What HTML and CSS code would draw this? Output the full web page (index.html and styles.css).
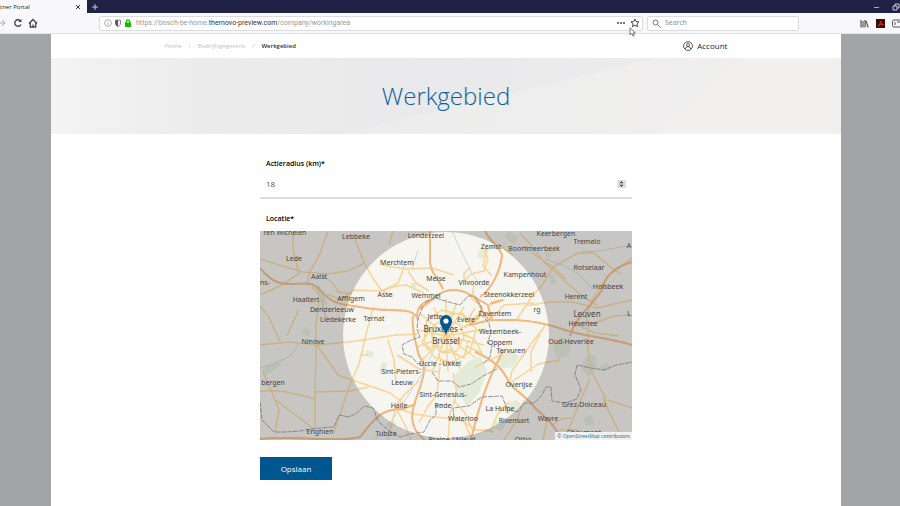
FILE: index.html
```html
<!DOCTYPE html>
<html lang="nl">
<head>
<meta charset="utf-8">
<title>Werkgebied - Partner Portal</title>
<link rel="stylesheet" href="styles.css">
</head>
<body>
<div class="tabs">
  <div class="tab"><span>tner Portal</span>
    <button class="icon" aria-label="Tab sluiten"><svg width="6" height="6" viewBox="0 0 6 6"><path d="M1 1l4 4M5 1L1 5" stroke="#333"/></svg></button>
  </div>
  <button class="icon" aria-label="Nieuw tabblad"><svg width="8" height="8" viewBox="0 0 8 8"><path d="M4 1v6M1 4h6" stroke="#c9c9dc"/></svg></button>
  <div class="controls">
    <svg width="6" height="6" viewBox="0 0 6 6"><path d="M0 3.500h5" stroke="#aaaabd"/></svg>
    <svg width="8" height="8" viewBox="0 0 8 8" fill="none" stroke="#c9c9dc"><path d="M1 3h4v4H1zM3 3V1h4v4H5"/></svg>
  </div>
</div>
<div class="toolbar">
  <div class="nav">
    <button class="icon" aria-label="Volgende"><svg width="8" height="10" viewBox="0 0 8 10" fill="none" stroke="#aaa"><path d="M0 5h5M2 2l3 3-3 3"/></svg></button>
    <button class="icon" aria-label="Vernieuwen"><svg width="10" height="10" viewBox="0 0 10 10" fill="none" stroke="#444" stroke-width="1.400"><path d="M8 6.500A3.300 3.300 0 1 1 7.500 2.800"/><path d="M8.500 1v3H5.500z" fill="#444" stroke="none"/></svg></button>
    <button class="icon" aria-label="Startpagina"><svg width="10" height="10" viewBox="0 0 10 10" fill="none" stroke="#444" stroke-width="1.300"><path d="M1 5.500L5 1.500l4 4M2.300 5v4h5.400V5M5 9V6.500"/></svg></button>
  </div>
  <div class="address">
    <svg width="8" height="8" viewBox="0 0 8 8" fill="none" stroke="#999" stroke-width=".8"><circle cx="4" cy="4" r="3.400"/><path d="M4 3.500V6M4 2v.8"/></svg>
    <svg width="8" height="8" viewBox="0 0 8 8"><path d="M1.500 1.200h5V4c0 2-1.200 3-2.500 3.600C2.700 7 1.500 6 1.500 4z" fill="none" stroke="#666" stroke-width=".8"/><path d="M1.500 1.200H4v6.200C2.500 7 1.500 6 1.500 4z" fill="#555"/></svg>
    <svg width="8" height="8" viewBox="0 0 8 8"><path d="M1 3.500h6V8H1z" fill="#12bc00"/><path d="M2.300 4V2.500a1.700 1.700 0 0 1 3.400 0V4" fill="none" stroke="#12bc00" stroke-width="1.200"/></svg>
    <span class="url">https://bosch-be-home.<b>thernovo-preview.com</b>/company/workingarea</span>
    <button class="icon" aria-label="Paginaacties"><svg width="10" height="8" viewBox="0 0 10 8" fill="#444"><circle cx="2" cy="4" r="1"/><circle cx="5" cy="4" r="1"/><circle cx="8" cy="4" r="1"/></svg></button>
    <button class="icon" aria-label="Bladwijzer"><svg width="10" height="10" viewBox="0 0 10 10" fill="none" stroke="#444"><path d="M5 1l1.200 2.600 2.800.3L6.900 5.800l.6 2.900L5 7.300 2.500 8.700l.6-2.900L1 3.900l2.800-.3z"/></svg></button>
    <svg class="cursor" width="8" height="10" viewBox="0 0 8 10"><path d="M1 .8v7l1.700-1.500L4 9l1.200-.6-1.200-2.500h2.300z" fill="#fff" stroke="#555" stroke-width=".8"/></svg>
  </div>
  <label class="search">
    <svg width="9" height="9" viewBox="0 0 9 9" fill="none" stroke="#777"><circle cx="3.500" cy="3.500" r="2.500"/><path d="M5.500 5.500L8.500 8.500"/></svg>
    <input type="search" placeholder="Search" aria-label="Search">
  </label>
  <div class="tools">
    <svg width="9" height="9" viewBox="0 0 9 9" stroke="#555" stroke-width="1.200"><path d="M1 1v7.500M3 2v6.500M5 1v7.500M6 2l2.200 6.500"/></svg>
    <svg width="9" height="9" viewBox="0 0 9 9"><path d="M0 0h9v9H0z" fill="#3d0b0b"/><path d="M2 7c2-1 2.500-3 2.500-5C4.500 4 5.500 5.500 7.500 5.500 5 5 3.500 5.500 2 7z" fill="none" stroke="#e33" stroke-width=".8"/></svg>
    <svg width="8" height="9" viewBox="0 0 8 9" fill="none" stroke="#555"><path d="M8 1H2Q.5 1 .5 2.500v4Q.5 8 2 8h6M3 3v3M5 3h3"/></svg>
  </div>
</div>
<div class="viewport">
<div class="page">
  <header class="top">
    <nav class="crumbs" aria-label="Kruimelpad"><a href="#">Home</a><span>/</span><a href="#">Bedrijfsgegevens</a><span>/</span><b>Werkgebied</b></nav>
    <a class="account" href="#"><svg width="10" height="10" viewBox="0 0 10 10" fill="none" stroke="#333" stroke-width=".8"><circle cx="5" cy="5" r="4.400"/><circle cx="5" cy="3.800" r="1.500"/><path d="M2.200 8c.2-3 5.400-3 5.600 0"/></svg>Account</a>
  </header>
  <div class="hero"><svg class="facets" viewBox="0 0 790 76" preserveAspectRatio="none">
    <defs>
      <linearGradient id="base"><stop offset="0" stop-color="#f4f4f4"/><stop offset=".18" stop-color="#ececec"/><stop offset=".5" stop-color="#e9e9eb"/><stop offset="1" stop-color="#f0eeee"/></linearGradient>
      <linearGradient id="wedge"><stop offset="0" stop-color="#ececec"/><stop offset="1" stop-color="#f1f0ef"/></linearGradient>
    </defs>
    <path d="M0 0h790v76H0z" fill="url(#base)"/><path d="M290 76L605 0H790v76z" fill="url(#wedge)"/><path d="M605 76L690 0h100v76z" fill="#f1f0ef"/></svg>
    <h1>Werkgebied</h1>
  </div>
  <form class="form">
    <label class="label" for="radius">Actieradius (km)*</label>
    <div class="field">
      <input id="radius" type="number" value="18">
      <svg width="9" height="8" viewBox="0 0 9 8"><path d="M0 0h9v8H0z" fill="#dedede"/><path d="M2.500 3.300l2-2.300 2 2.300zM2.500 4.700l2 2.300 2-2.300z" fill="#444"/></svg>
    </div>
    <div class="label place" id="locatie">Locatie*</div>
    <div class="map" role="group" aria-labelledby="locatie">
      <svg class="tiles" viewBox="260 231 372 209">
        <path d="M260 231h372v209H260z" fill="#f7f5f0"/>
        <g fill="#d3e5c4" opacity=".5">
          <path d="M455 375l14-14 12-4 6 14-8 22-12 14-10-18zM497 352l14-3 8 8-6 10-14 2zM553 345l8-8 10 4-2 14-12 4zM585 357l10-2 2 14-8 8-8-8zM508 231l10 6-4 8-9-8zM316 288l7 2 5 14-6 4zM262 370l12-8 8 2-10 8-8 4zM480 248l7 2-4 9-6-2zM548 247l6 5-6 6-4-5z"/>
          <path d="M382 362l6 1-3 8-6 3zM505 404l12-4 6 6-14 8zM412 282l5 2-2 6-5-3zM366 350l8 2-2 6-6-2zM494 421l12 2-4 8-10-3zM386 423l7-3 4 4-8 5zM548 274l6 2 3 7-6 2zM584 418l8-3 2 9-8 2zM304 327l7 4-3 6-6-4zM600 366l8-3 2 7-8 2z"/>
        </g>
        <g class="water"><path d="M452 231l8 18 12 24 10 15M418 250l-6 20M545 259l18 6 17 10 12 14M580 252l20-1 20-4 12-1M375 440l18-21 16-25 18-28 10-24M260 368l14-4 16-8 9-12M318 285l6 13-2 12"/></g>
        <g class="minor">
          <path d="M293 231l0 18 6 24M328 231l-9 25-10 17-2 13M260 259l19 6 24 7 24 2 21-3 17-8M260 295l20-9 20-13M355 240l8 20 9 17 9 13 12 6M312 287l8 8 5 20 5 5M327 294l14 6 13-10 26 1 17-5 9-1 18 8M322 275l11 8 5 9 14 2M299 310l-5 10-7 16M319 300l-3 25 0 30-1 30 0 45M373 307l-7 27-7 30-10 23-15 45M260 345l30-3 28 3 38-4 40-6 22-1M280 341l-12-25-8-10M317 345l9 13 12 17 14 5 18 6 20 7 16 12M260 391l22 0 22 5 11 3M276 400l14 11 14 10 10 9M263 372l8 18 8 20-4 22M315 392l34-1 20-4"/>
          <path d="M388 340l6 20 2 25M360 355l8 0M405 265l-7 18-16 8M408 271l8 12 13 8M430 231l0 26M382 265l23 4 27-1M393 231l-4 14M432 268l22 7M463 282l8-8 13-3 4-12-4-10 17-3 12 9M487 249l-4 17 9 10M464 280l0-7 6-5M474 285l-2 14 10 8M524 247l20 14 9 6-10 17-12 14-14 21M553 267l25-14 16 0 15 13 12 8M520 233l12 13 12 16 22 20 17 15 14 8M553 267l13 12M632 258l-24 18-17 25-5 20M525 306l25-4 22 0 25 6 35-8M491 302l13-2M475 308l-9 15M490 320l14-15 30-2M574 322l20 1 20-7 18-1M573 323l22 10 24 3M588 323l0 22 2 24 14 26 4 16M545 326l-14 18-19 27-2 10M510 383l28-19 22-4M540 334l-9 18 0 20M590 379l-14 32-8 20M608 400l24 8M603 399l10 21 10 20M551 426l10-7 10-1M559 430l18 0 14 10M548 417l-5 23M524 400l-7 20-13 20M509 402l-11 11-7 17-19 0M440 366l-3 28-10 14-8 15M453 373l4 20-7 20-2 27M419 381l-14 13-9 12-8 34M400 409l14 5 20 3 25 2 14 9M396 408l9 17 6 15M397 355l22 14 20 3M454 401l11 12 7 16 22 3M501 355l-18 8-9 5M463 419l9 21"/>
        </g>
        <g class="street">
          <path d="M446 336L421 314M446 336l-12-29M446 336V299M446 336l10-32M446 336l18-29M446 336l34-18M446 336l39-7M446 336l38 9M446 336l30 22M446 336l14 33M446 336l2 36M446 336l-13 34M446 336l-24 24M446 336l-29 11M446 336l-27-6"/>
          <path d="M434 325l12-6 14 6 4 12-7 14-14 2-11-10zM427 320l15-10 20 5 14 14-6 23-19 11-17-6-10-17zM424 330l7-2 2 17 8 2M460 333l14 6 8 14-16-7M439 353l2 11 14-2M468 340l-4 18-12-6M427 350l8-4 6 6 12-3M430 330l-8 12 7 8M473 325l-11-12-15 2M465 328l15-16"/>
        </g>
        <g class="motorcase">
          <path id="motorways" d="M260 268c10 12 17 16 30 16s21-3 29 5 12 14 28 16 25 5 42 5 27 1 29 10M418 320c-3-12 3-16 12-20s11-10 23-10 22 6 26 14 5 12 11 17M430 231v30c0 11 8 17 13 28M485 231c5 11 17 18 17 25-2 15-10 33-22 41M480 315l-10 10 20-5 25 0c20 1 34 4 50 10 20 7 42 7 67 15M413 316c-2 12 3 28 6 40 9 10 4 23-2 40-7 18-8 32 8 44M475 352c17 7 29 17 34 31 7 8 18 14 27 26 10 9 18 15 26 31M504 350c-12 20-24 50-33 90M632 262c-22 7-27 16-30 28-7 12-27 27-32 46M260 439c40-4 77 4 100-2 13-15 18-28 42-28l14-5M490 304l13-4M476 298l12 7 3 15M420 309l17-13"/>
        </g>
        <use href="#motorways" class="motor"/>
        <g class="border"><path d="M425 302l10-4 14 4 11 3 8-9 7 0 7 12-3 5 10 10 2 10-4 10 5 2-2 12-7 7M423 306l-5 13-1 10 3 8-9 3-9 5 2 9 8 3 6 7 5-1M432 372l6 9 14 0 7 6 12-3 12-8 14-7M260 402l2 18 12 12 12 0 14-1 18-3 16-1 5-12 10 2 8-4 7-7 9 2 5 13 10 9 12 7 10-3 14-2 6-12 6-5 0-10 7 0M454 418l-1-10 16-2 13-9 20-1 5 13 10 3 8-9 9 0 8-8 4-8 5 0 1 14 13 2 12-4 4-10-6-14 2-10 14 3 13 2 12-5 17-3 13 7 8 11"/></g>
        <path d="M260 231h372v209H260zM446 232a103 103 0 1 0 0 206a103 103 0 1 0 0-206z" fill="#6c6c6c" fill-opacity=".34" fill-rule="evenodd"/>
        <g class="names">
          <text x="285" y="235">ren Wichelen</text><text x="356" y="239">Lebbeke</text><text x="426" y="238">Londerzeel</text><text x="556" y="236">Keerbergen</text><text x="587" y="244">Tremelo</text><text x="491" y="249">Zemst</text><text x="534" y="251">Boortmeerbeek</text><text x="629" y="248">A</text>
          <text x="294" y="261">Lede</text><text x="397" y="265">Merchtem</text><text x="589" y="270">Rotselaar</text><text x="319" y="279">Aalst</text><text x="436" y="281">Meise</text><text x="474" y="285">Vilvoorde</text><text x="525" y="277">Kampenhout</text><text x="608" y="289">Holsbeek</text><text x="265" y="285">ns-</text>
          <text x="306" y="302">Haaltert</text><text x="351" y="301">Affligem</text><text x="385" y="297">Asse</text><text x="426" y="298">Wemmel</text><text x="509" y="297">Steenokkerzeel</text><text x="576" y="299">Herent</text><text x="332" y="312">Denderleeuw</text><text x="338" y="322">Liedekerke</text><text x="374" y="321">Ternat</text><text x="435" y="319">Jette</text><text x="466" y="322">Evere</text><text x="495" y="316">Zaventem</text><text x="537" y="312">rg</text><text class="city" x="587" y="317">Leuven</text><text x="583" y="326">Heverlee</text><text x="629" y="316">L</text>
          <text class="city" x="443" y="332">Bruxelles -</text><text class="city" x="446" y="344">Brussel</text><text x="500" y="334">Wezembeek-</text><text x="500" y="345">Oppem</text><text x="511" y="353">Tervuren</text><text x="313" y="344">Ninove</text><text x="571" y="344">Oud-Heverlee</text><text x="440" y="366">Uccle - Ukkel</text><text x="401" y="374">Sint-Pieters-</text><text x="402" y="385">Leeuw</text><text x="273" y="385">bergen</text>
          <text x="519" y="387">Overijse</text><text x="443" y="397">Sint-Genesius-</text><text x="443" y="408">Rode</text><text x="399" y="408">Halle</text><text x="500" y="411">La Hulpe</text><text x="584" y="407">Grez-Doiceau</text><text x="463" y="421">Waterloo</text><text x="514" y="423">Rixensart</text><text x="548" y="421">Wavre</text><text x="320" y="434">Enghien</text><text x="386" y="436">Tubize</text><text x="452" y="442">Braine-l'Alleud</text><text x="523" y="442">Ottig</text><text x="584" y="435">Chaumont</text>
        </g>
        <path d="M446 336c-1-7-6-9-6-15a6 6 0 0 1 12 0c0 6-5 8-6 15z" fill="#005691"/><circle cx="446" cy="321" r="2.600" fill="#fff"/>
      </svg>
      <div class="credit">© <a href="#">OpenStreetMap</a> contributors</div>
    </div>
    <button class="save" type="button">Opslaan</button>
  </form>
</div>
</div>
</body>
</html>
```
FILE: styles.css
```css
* { box-sizing: border-box; }
body {
  margin: 0;
  min-height: 100vh;
  display: flex;
  flex-direction: column;
  background: #a3a4a6;
  color: #222;
  font-family: "Open Sans", sans-serif;
  font-size: 7px;
  line-height: 10px;
}
svg { display: block; flex: none; }
a { color: inherit; text-decoration: none; }
button, input { font: inherit; color: inherit; border: 0; padding: 0; background: none; }
.icon { display: block; flex: none; }

.tabs { display: flex; align-items: center; gap: 4px; height: 13px; background: #1f2244; }
.tab { display: flex; align-items: center; justify-content: space-between; width: 87px; height: 13px; padding-right: 6px; background: #f9f9fb; font-size: 6px; }
.controls { display: flex; align-items: center; gap: 12px; margin-left: auto; }

.toolbar { display: flex; align-items: center; gap: 4px; height: 21px; background: #f8f8fa; border-bottom: 1px solid #e2e2e4; }
.nav { display: flex; gap: 5px; width: 95px; }
.address, .search { display: flex; align-items: center; height: 15px; background: #fff; border: 1px solid #dcdcde; border-radius: 2px; }
.address { position: relative; flex: 1; gap: 2px; padding: 0 2px 0 4px; }
.url { flex: 1; padding-left: 2px; color: #999; font-family: "Noto Sans", sans-serif; font-size: 6px; }
.url { font-family: Roboto, sans-serif; font-size: 7px; }
.url b { color: #333; font-weight: 400; }
.address .icon:last-of-type { margin-left: 2px; }
.cursor { position: absolute; right: 5px; bottom: -7px; }
.search { width: 152px; gap: 4px; padding: 0 4px; }
.search input { width: 100%; outline: 0; }
.search input::placeholder { color: #888; }
.tools { display: flex; justify-content: flex-end; gap: 7px; width: 97px; }

.viewport { flex: 1; display: flex; padding: 0 59px 0 51px; }
.page { flex: 1; background: #fff; }
.top { display: flex; align-items: center; justify-content: space-between; width: 72%; height: 24px; margin: 0 auto; padding: 0 3px; }
.crumbs { display: flex; gap: 7px; color: #c2c2c2; font-size: 6px; }
.crumbs b { color: #333; font-weight: 600; }
.account { display: flex; align-items: center; gap: 4px; font-size: 8px; }
.hero { position: relative; display: flex; align-items: center; justify-content: center; height: 76px; }
.facets { position: absolute; inset: 0; width: 100%; height: 100%; }
h1 { position: relative; margin: 0; color: #0d609f; font-size: 24px; line-height: 32px; font-weight: 300; }

.form { width: 372px; max-width: 100%; margin: 0 auto; padding: 24px 0; }
.label { display: block; padding: 0 6px; line-height: 12px; font-weight: 600; color: #000; }
.field { display: flex; align-items: center; height: 29px; padding: 0 6px; border-bottom: 2px solid #dcdcde; }
.field input { flex: 1; min-width: 0; appearance: textfield; outline: 0; color: #555; font-size: 8px; }
.field input::-webkit-inner-spin-button { display: none; }
.place { margin-top: 14px; }
.map { position: relative; margin-top: 6px; }
.tiles { width: 100%; height: auto; }
.tiles path { stroke-linejoin: round; }
.water, .minor, .street, .motorcase, .motor, .border { fill: none; }
.water { stroke: #c5d8df; stroke-width: 1; }
.minor { stroke: #f7d497; stroke-width: 1.5; }
.street { stroke: #f8d58f; stroke-width: 1.4; }
.motorcase { stroke: #efb27a; stroke-width: 2; }
.motor { stroke: #f6bc80; stroke-width: 1; }
.border { stroke: #94929b; stroke-width: 1; stroke-dasharray: 5 1; }
.names { fill: #444; font-family: "Noto Sans", sans-serif; font-size: 7px; text-anchor: middle; }
.names .city { font-size: 8px; }
.credit { position: absolute; right: 0; bottom: 0; padding: 0 2px; background: #f1f1f1; color: #444; font-size: 5px; line-height: 8px; }
.credit a { color: #0078a8; }
.save { display: block; width: 72px; height: 23px; margin-top: 17px; background: #005691; color: #fff; font-size: 8px; line-height: 22px; }
```
